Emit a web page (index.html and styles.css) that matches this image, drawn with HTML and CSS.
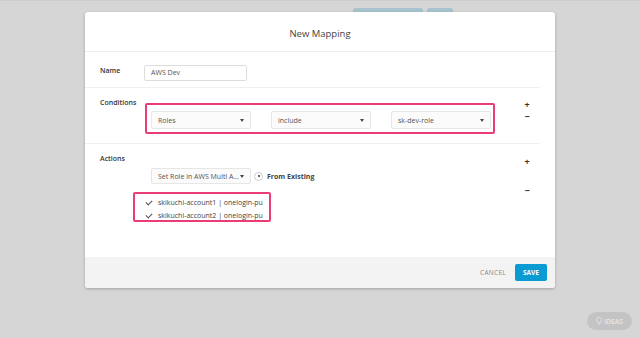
FILE: index.html
```html
<!DOCTYPE html>
<html lang="en">
<head>
  <meta charset="UTF-8" />
  <title>New Mapping</title>
  <link rel="stylesheet" href="styles.css">
</head>
<body>
  <!-- page behind the overlay -->
  <div class="page">
    <div class="page-actions">
      <span class="page-btn wide"></span>
      <span class="page-btn"></span>
    </div>
  </div>

  <!-- modal -->
  <div class="modal">
    <header class="modal-head">New Mapping</header>

    <div class="modal-body">
      <div class="row row-name">
        <div class="label">Name</div>
        <div class="content">
          <input class="text-input" type="text" value="AWS Dev" />
        </div>
      </div>

      <div class="row row-cond">
        <div class="label">Conditions</div>
        <div class="content">
          <div class="highlight cond-box">
            <div class="select">Roles<span class="caret"></span></div>
            <div class="select">include<span class="caret"></span></div>
            <div class="select">sk-dev-role<span class="caret"></span></div>
          </div>
        </div>
        <div class="controls">
          <span class="ctl">+</span>
          <span class="ctl">&minus;</span>
        </div>
      </div>

      <div class="row row-actions">
        <div class="label">Actions</div>
        <div class="content">
          <div class="action-line">
            <div class="select small">Set Role in AWS Multi A...<span class="caret"></span></div>
            <span class="radio"></span>
            <span class="from">From Existing</span>
          </div>
          <div class="highlight acct-box">
            <div class="acct"><span class="check"></span>skikuchi-account1 | onelogin-pu</div>
            <div class="acct"><span class="check"></span>skikuchi-account2 | onelogin-pu</div>
          </div>
        </div>
        <div class="controls controls-wide">
          <span class="ctl">+</span>
          <span class="ctl">&minus;</span>
        </div>
      </div>
    </div>

    <footer class="modal-foot">
      <button class="btn-cancel">Cancel</button>
      <button class="btn-save">Save</button>
    </footer>
  </div>

  <div class="ideas">
    <svg width="6" height="8" viewBox="0 0 6 8"><path d="M3 0.5a2.4 2.4 0 0 0-1.4 4.4v1h2.8v-1A2.4 2.4 0 0 0 3 0.5z" fill="none" stroke="#e2e2e2" stroke-width="0.9"/><path d="M2 6.8h2" stroke="#e2e2e2" stroke-width="0.9"/></svg>
    IDEAS
  </div>
</body>
</html>
```

FILE: styles.css
```css
body {
  margin: 0;
  background: #d6d6d6;
  font-family: "Open Sans", sans-serif;
  color: #333;
  min-height: 338px;
  overflow: hidden;
}
.page {
  border-top: 1px solid #cdcdcd;
  height: 337px;
}
.page-actions {
  display: flex;
  gap: 4px;
  margin: 7px 0 0 353px;
}
.page-btn {
  width: 26px;
  height: 14px;
  background: #a8c3cd;
  border-radius: 2px;
}
.page-btn.wide {
  width: 70px;
}

/* modal */
.modal {
  position: absolute;
  top: 12px;
  left: 85px;
  width: 470px;
  height: 276px;
  background: #fff;
  border-radius: 3px;
  box-shadow: 0 1px 3px rgba(0,0,0,0.25);
  display: flex;
  flex-direction: column;
  overflow: hidden;
}
.modal-head {
  height: 40px;
  line-height: 43px;
  text-align: center;
  font-size: 9.5px;
  color: #444;
  border-bottom: 1px solid #efefef;
  box-sizing: border-box;
}
.modal-body {
  flex: 1;
}
.row {
  display: flex;
  margin-right: 15px;
  padding-left: 15px;
  border-bottom: 1px solid #efefef;
}
.row:last-child {
  border-bottom: none;
}
.label {
  width: 44px;
  font-size: 7px;
  font-weight: 600;
  color: #333;
}
.content {
  flex: 1;
}
.controls {
  width: 20px;
  margin-right: 3px;
  display: flex;
  flex-direction: column;
  align-items: center;
  font-size: 9px;
  font-weight: 700;
  line-height: 12px;
  color: #333;
}
.row-name {
  height: 35px;
  align-items: center;
}
.row-name .label {
  padding-top: 1px;
}
.text-input {
  width: 103px;
  height: 16px;
  box-sizing: border-box;
  border: 1px solid #ddd;
  border-radius: 2px;
  padding: 0 6px;
  font-family: inherit;
  font-size: 7px;
  color: #555;
  margin-top: 2px;
}
.row-cond {
  height: 56px;
  padding-top: 10px;
  box-sizing: border-box;
}
.row-cond .controls {
  margin-top: 1px;
}
.highlight {
  border: 2px solid #ea3d78;
  border-radius: 2px;
  box-sizing: border-box;
}
.cond-box {
  width: 350px;
  height: 31px;
  margin-top: 5px;
  margin-left: 1px;
  display: flex;
  gap: 20px;
  padding: 6px 0 0 4px;
}
.select {
  position: relative;
  width: 100px;
  height: 18px;
  line-height: 18px;
  box-sizing: border-box;
  border: 1px solid #e6e6e6;
  border-radius: 2px;
  background: #fbfbfb;
  padding-left: 6px;
  font-size: 7px;
  color: #555;
}
.select.small {
  height: 16px;
  line-height: 15px;
}
.caret {
  position: absolute;
  right: 6px;
  top: 50%;
  margin-top: -1px;
  border-left: 2.5px solid transparent;
  border-right: 2.5px solid transparent;
  border-top: 3px solid #444;
}
.row-actions {
  padding-top: 10px;
  height: 113px;
  box-sizing: border-box;
}
.controls-wide {
  line-height: 29px;
  margin-top: -7px;
}
.action-line {
  display: flex;
  align-items: center;
  margin: 14px 0 0 7px;
}
.radio {
  width: 7px;
  height: 7px;
  border: 1px solid #ccc;
  border-radius: 50%;
  margin-left: 3px;
  position: relative;
  background: #fff;
}
.radio::after {
  content: "";
  position: absolute;
  left: 2.5px;
  top: 2.5px;
  width: 2px;
  height: 2px;
  background: #333;
  border-radius: 50%;
}
.from {
  font-size: 7px;
  font-weight: 700;
  color: #444;
  margin-left: 4px;
}
.acct-box {
  width: 138px;
  height: 30px;
  margin: 8px 0 0 -11px;
  padding: 2px 0 0 10px;
}
.acct {
  display: flex;
  align-items: center;
  height: 13px;
  font-size: 7px;
  color: #444;
}
.check {
  width: 5px;
  height: 3px;
  border-left: 1.5px solid #555;
  border-bottom: 1.5px solid #555;
  transform: rotate(-45deg);
  margin: -2px 6px 0 1px;
}

/* footer */
.modal-foot {
  height: 32px;
  background: #f3f3f3;
  display: flex;
  align-items: center;
  justify-content: flex-end;
  padding-right: 8px;
  gap: 9px;
}
.btn-cancel {
  background: none;
  border: none;
  font-family: inherit;
  font-size: 6.5px;
  color: #888;
  text-transform: uppercase;
  letter-spacing: 0.3px;
  padding: 0;
}
.btn-save {
  width: 32px;
  height: 17px;
  background: #0b9bd3;
  color: #fff;
  border: none;
  border-radius: 2px;
  font-family: inherit;
  font-size: 6.5px;
  font-weight: 700;
  text-transform: uppercase;
  padding: 0;
}

.ideas {
  position: fixed;
  left: 587px;
  top: 312px;
  width: 45px;
  height: 18px;
  border-radius: 9px;
  background: #c4c4c4;
  color: #e2e2e2;
  font-size: 6.5px;
  font-weight: 700;
  display: flex;
  align-items: center;
  justify-content: center;
  gap: 2px;
}
```
